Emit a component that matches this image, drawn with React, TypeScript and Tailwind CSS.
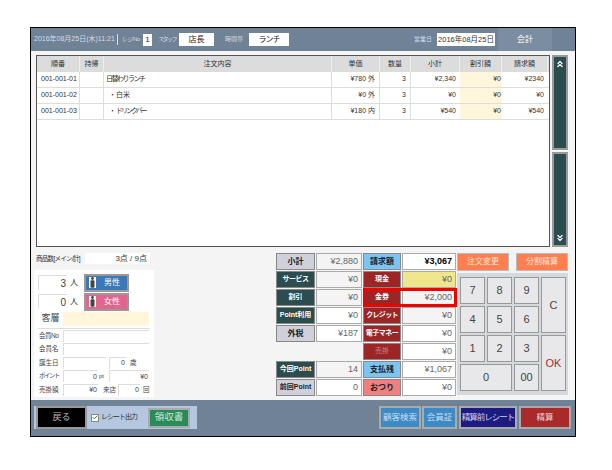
import { Check, ChevronsUp, ChevronsDown } from 'lucide-react';

const rows = [
  { no: '001-001-01', name: '日替わりランチ', child: false, nameCls: 'tracking-[-1.5px]', price: '¥780 外', qty: 3, sub: '¥2,340', disc: '¥0', total: '¥2340' },
  { no: '001-001-02', name: '白米', child: true, nameCls: '', price: '¥0 外', qty: 3, sub: '¥0', disc: '¥0', total: '¥0' },
  { no: '001-001-03', name: 'ドリンクバー', child: true, nameCls: 'tracking-[-2px]', price: '¥180 内', qty: 3, sub: '¥540', disc: '¥0', total: '¥540' },
];

const cols = 'grid grid-cols-[43px_24px_228px_48px_31px_49px_42px_46px]';

const GREEN = 'bg-[#2c4d4d] text-white font-bold';
const GRAY = 'bg-[#cfd0da] text-[#222] font-bold';
const RED = 'bg-[#9c2626] text-white font-bold';
const SKY = 'bg-[#7cc4f4] text-[#222] font-bold';

function Label({ text, color, size = 'text-[8px]' }: { text: string; color: string; size?: string }) {
  return (
    <div className={`h-[17px] border border-[#888] flex items-center justify-center whitespace-nowrap ${size} ${color}`}>{text}</div>
  );
}

function Val({ text, bg = 'bg-white', strong = false }: { text: string; bg?: string; strong?: boolean }) {
  return (
    <div className={`h-[17px] border border-[#aaa] flex items-center justify-end pr-[3px] ${bg} ${strong ? 'text-[9px] font-bold text-black' : 'text-[9px] text-[#666]'}`}>
      {text}
    </div>
  );
}

function Key({ text, cls = '' }: { text: string; cls?: string }) {
  return (
    <div className={`bg-[#e8e8ea] border border-[#999] flex items-center justify-center text-[11px] text-[#444] ${cls}`}>{text}</div>
  );
}

function Field({ text = '', cls = '' }: { text?: string; cls?: string }) {
  return <div className={`h-[12px] bg-white border-t border-l border-[#ddd] text-[7px] text-[#444] flex items-center justify-end pr-[1px] ${cls}`}>{text}</div>;
}

function Person() {
  return (
    <svg width="7" height="11" viewBox="0 0 7 11" className="fill-current">
      <circle cx="3.5" cy="1.5" r="1.4" />
      <rect x="1.5" y="3.2" width="4" height="7.5" rx="1" />
    </svg>
  );
}

export default function App() {
  return (
    <div className="w-[612px] h-[470px] bg-white pt-[27px] pl-[30px] font-['Liberation_Sans','Noto_Sans_CJK_JP',sans-serif]">
      <div className="w-[546px] h-[410px] border border-black bg-[#f4f4f4] flex flex-col">
        {/* Header */}
        <div className="h-[23px] bg-[#6f8296] flex items-center pl-[3px] text-[7px] text-[#d5dde6] shrink-0 whitespace-nowrap">
          <span className="w-[82px]">2016年08月25日(木)11:21</span>
          <span className="ml-[1px] w-px h-[11px] bg-[#d5dde6]" />
          <span className="ml-[4px] w-[18px] text-[6px] tracking-[-0.5px]">レジNo</span>
          <span className="ml-[3px] w-[9px] h-[12px] bg-white text-[#222] text-[8px] flex items-center justify-center">1</span>
          <span className="ml-[6px] w-[17px] text-[6px] tracking-[-1.5px]">スタッフ</span>
          <span className="ml-[4px] w-[35px] h-[13px] bg-white text-[#222] text-[8px] flex items-center justify-center">店長</span>
          <span className="ml-[11px] w-[17px] text-[6px]">時間帯</span>
          <span className="ml-[7px] w-[40px] h-[13px] bg-white text-[#222] text-[8px] tracking-[-1px] flex items-center justify-center">ランチ</span>
          <span className="ml-[125px] w-[18px] text-[6px]">営業日</span>
          <span className="ml-[5px] w-[58px] h-[13px] bg-white text-[#333] text-[7.5px] flex items-center justify-center">2016年08月25日</span>
          <div className="ml-[3px] w-[54px] h-full bg-[#7b8da0] flex items-center justify-center text-[8px] text-white">会計</div>
        </div>

        {/* Order table + scroll buttons */}
        <div className="flex pl-[5px] pt-[4px] gap-[2px] shrink-0">
          <div className="w-[514px] h-[192px] border border-[#555] bg-white overflow-hidden">
            <div className={`${cols} h-[16px] bg-[#dcdcdc] text-[7px] text-[#333]`}>
              {['順番', '持帰', '注文内容', '単価', '数量', '小計', '割引額', '請求額'].map((h) => (
                <div key={h} className="flex items-center justify-center border-r border-[#eee]">{h}</div>
              ))}
            </div>
            {rows.map((r) => (
              <div key={r.no} className={`${cols} h-[16px] text-[7px] text-[#333] border-b border-[#ddd]`}>
                <div className="flex items-center pl-[4px] border-r border-[#ddd] whitespace-nowrap">{r.no}</div>
                <div className="border-r border-[#ddd]" />
                <div className={`flex items-center border-r border-[#ddd] whitespace-nowrap ${r.child ? 'pl-[5px]' : 'pl-[2px]'}`}>
                  {r.child && <span>・</span>}
                  <span className={r.nameCls}>{r.name}</span>
                </div>
                <div className="flex items-center justify-end pr-[4px] border-r border-[#ddd]">{r.price}</div>
                <div className="flex items-center justify-end pr-[4px] border-r border-[#ddd]">{r.qty}</div>
                <div className="flex items-center justify-end pr-[4px]">{r.sub}</div>
                <div className="flex items-center justify-end pr-[1px] bg-[#fff6dc]">{r.disc}</div>
                <div className="flex items-center justify-end pr-[4px]">{r.total}</div>
              </div>
            ))}
          </div>
          <div className="w-[16px] h-[192px] flex flex-col gap-[2px]">
            <div className="flex-1 bg-[#2c4d4d] border-2 border-[#999] flex justify-center text-white pt-[2px]">
              <ChevronsUp size={10} strokeWidth={3} />
            </div>
            <div className="flex-1 bg-[#2c4d4d] border-2 border-[#999] flex items-end justify-center text-white pb-[2px]">
              <ChevronsDown size={10} strokeWidth={3} />
            </div>
          </div>
        </div>

        {/* Lower area */}
        <div className="flex flex-1 pt-[6px] pl-[3px]">
          {/* Customer panel */}
          <div className="w-[121px] shrink-0">
            <div className="flex items-center h-[11px] text-[6.5px] text-[#333] pl-[2px] whitespace-nowrap">
              <span className="w-[49px] tracking-[-0.7px]">商品数[メイン/計]</span>
              <span className="w-[65px] h-[11px] bg-white flex items-center justify-end pr-[3px] text-[8px]">3点 / 9点</span>
            </div>
            <div className="mt-[6px] w-[120px] h-[127px] bg-white px-[4px] pt-[3px] text-[#444]">
              {[
                { n: 3, label: '男性', bg: 'bg-[#3b78b5]' },
                { n: 0, label: '女性', bg: 'bg-[#e0668c]' },
              ].map((p) => (
                <div key={p.label} className="flex items-center h-[19px]">
                  <span className="w-[29px] h-[15px] border-t border-l border-[#ddd] text-[10px] flex items-center justify-end pr-[1px]">{p.n}</span>
                  <span className="ml-[3px] w-[12px] text-[8px] text-[#222]">人</span>
                  <div className={`ml-[2px] w-[45px] h-[18px] border-2 border-[#999] text-white text-[8px] flex items-center ${p.bg}`}>
                    <span className="ml-[3px] w-[7px] h-[11px] bg-white flex justify-center text-[#444]"><Person /></span>
                    <span className="ml-[8px]">{p.label}</span>
                  </div>
                </div>
              ))}
              <div className="flex items-center mt-[1px] pb-[2px] border-b border-[#ddd]">
                <span className="w-[25px] text-[9px] text-center">客層</span>
                <div className="w-[86px] h-[14px] bg-[#fff6dc]" />
              </div>
              <div className="flex flex-col text-[6.5px] whitespace-nowrap">
                <div className="flex items-center h-[13.5px]"><span className="w-[25px] pl-[1px] tracking-[-0.5px]">会員No</span><Field cls="w-[86px]" /></div>
                <div className="flex items-center h-[13.5px]"><span className="w-[25px] pl-[1px]">会員名</span><Field cls="w-[86px]" /></div>
                <div className="flex items-center h-[13.5px]">
                  <span className="w-[25px] pl-[1px]">誕生日</span>
                  <Field cls="w-[43px]" />
                  <Field text="0" cls="ml-[3px] w-[17px]" />
                  <span className="ml-[4px]">歳</span>
                </div>
                <div className="flex items-center h-[13.5px]">
                  <span className="w-[25px] pl-[1px] tracking-[-1.5px]">ポイント</span>
                  <Field text="0" cls="w-[35px]" />
                  <span className="ml-[1px] w-[10px] text-[6px]">pt</span>
                  <Field text="¥0" cls="w-[40px]" />
                </div>
                <div className="flex items-center h-[13.5px]">
                  <span className="w-[25px] pl-[1px]">売掛額</span>
                  <Field text="¥0" cls="w-[35px]" />
                  <span className="ml-[5px] w-[15px]">来店</span>
                  <Field text="0" cls="w-[22px]" />
                  <span className="ml-[3px]">回</span>
                </div>
              </div>
            </div>
          </div>

          {/* Totals */}
          <div className="ml-[120px] w-[181px] h-[143px] shrink-0 relative">
            <div className="grid grid-cols-[39px_46px_38px_54px] gap-x-[1px] gap-y-[1px] auto-rows-[17px] pl-[1px]">
              <Label text="小計" color={GRAY} />
              <Val text="¥2,880" bg="bg-[#f4f4f4]" />
              <Label text="請求額" color={SKY} />
              <Val text="¥3,067" strong />

              <Label text="サービス" color={GREEN} size="text-[7px] tracking-[-0.5px]" />
              <Val text="¥0" bg="bg-[#f4f4f4]" />
              <Label text="現金" color={RED} size="text-[7px]" />
              <Val text="¥0" bg="bg-[#f0e68c]" />

              <Label text="割引" color={GREEN} size="text-[7px]" />
              <Val text="¥0" bg="bg-[#f4f4f4]" />
              <Label text="金券" color={RED} size="text-[7px]" />
              <Val text="¥2,000" bg="bg-[#f4f4f4]" />

              <Label text="Point利用" color={GREEN} size="text-[7px]" />
              <Val text="¥0" />
              <Label text="クレジット" color={RED} size="text-[7px] tracking-[-0.7px]" />
              <Val text="¥0" bg="bg-[#f4f4f4]" />

              <Label text="外税" color={GRAY} />
              <Val text="¥187" />
              <Label text="電子マネー" color={RED} size="text-[7px] tracking-[-0.5px]" />
              <Val text="¥0" />

              <div />
              <div />
              <Label text="売掛" color="bg-[#9c2626] text-[#c98080]" size="text-[7px]" />
              <Val text="¥0" />

              <Label text="今回Point" color={GREEN} size="text-[7px]" />
              <Val text="14" bg="bg-[#f4f4f4]" />
              <Label text="支払残" color={SKY} />
              <Val text="¥1,067" />

              <Label text="前回Point" color={GRAY} size="text-[7px]" />
              <Val text="0" />
              <Label text="おつり" color="bg-[#f08080] text-[#222] font-bold" />
              <Val text="¥0" />
            </div>
            {/* red highlight around 金券 row */}
            <div className="absolute left-[88px] top-[35px] w-[94px] h-[19px] border-[3px] border-[#f00000]" />
          </div>

          {/* Keypad */}
          <div className="ml-[1px] w-[111px] shrink-0">
            <div className="flex gap-[7px] h-[18px]">
              <div className="w-[52px] bg-[#ff7f50] border border-[#bbb] text-[#ffe4d8] text-[8px] flex items-center justify-center">注文変更</div>
              <div className="w-[52px] bg-[#ff7f50] border border-[#bbb] text-[#ffe4d8] text-[8px] flex items-center justify-center">分割精算</div>
            </div>
            <div className="mt-[2px] w-[111px] h-[122px] bg-[#d5d8dc] pl-[3px] pt-[4px] grid grid-cols-[25px_25px_25px_25px] grid-rows-[repeat(4,27px)] gap-x-[2px] gap-y-[2px]">
              <Key text="7" />
              <Key text="8" />
              <Key text="9" />
              <Key text="C" cls="row-span-2" />
              <Key text="4" />
              <Key text="5" />
              <Key text="6" />
              <Key text="1" />
              <Key text="2" />
              <Key text="3" />
              <Key text="OK" cls="row-span-2 text-[#a03030]" />
              <Key text="0" cls="col-span-2" />
              <Key text="00" />
            </div>
          </div>
        </div>

        {/* Footer */}
        <div className="h-[36px] bg-[#6f8296] shrink-0 flex items-center pl-[3px] pb-[1px] text-[8px] whitespace-nowrap">
          <div className="w-[163px] h-[23px] bg-[#b4c6e0] flex items-center pl-[2px]">
            <div className="w-[51px] h-[23px] bg-black border-2 border-[#999] text-[#bbb] text-[9px] flex items-center justify-center">戻る</div>
            <span className="ml-[4px] w-[8px] h-[8px] bg-white border border-[#888] flex items-center justify-center text-[#2a8a3a]">
              <Check size={7} strokeWidth={4} />
            </span>
            <span className="ml-[2px] w-[36px] text-[7px] tracking-[-1px] text-[#333]">レシート出力</span>
            <div className="ml-[11px] w-[42px] h-[20px] bg-[#2a8a5a] border-2 border-[#aaa] text-[#c5ecd5] text-[9.5px] flex items-center justify-center">領収書</div>
          </div>
          <div className="ml-[182px] w-[42px] h-[23px] bg-[#3d8ac4] border-2 border-[#aaa] text-[#c4dff2] text-[8.5px] flex items-center justify-center">顧客検索</div>
          <div className="ml-[1px] w-[35px] h-[23px] bg-[#3d8ac4] border-2 border-[#aaa] text-[#c4dff2] text-[8.5px] flex items-center justify-center">会員証</div>
          <div className="ml-[2px] w-[58px] h-[23px] bg-[#1c1c80] border-2 border-[#aaa] text-[#d0d0f0] text-[8.5px] tracking-[-1px] flex items-center justify-center">精算前レシート</div>
          <div className="ml-[2px] w-[52px] h-[23px] bg-[#a82a2a] border-2 border-[#aaa] text-[#f0d0d0] text-[8.5px] flex items-center justify-center">精算</div>
        </div>
      </div>
    </div>
  );
}
